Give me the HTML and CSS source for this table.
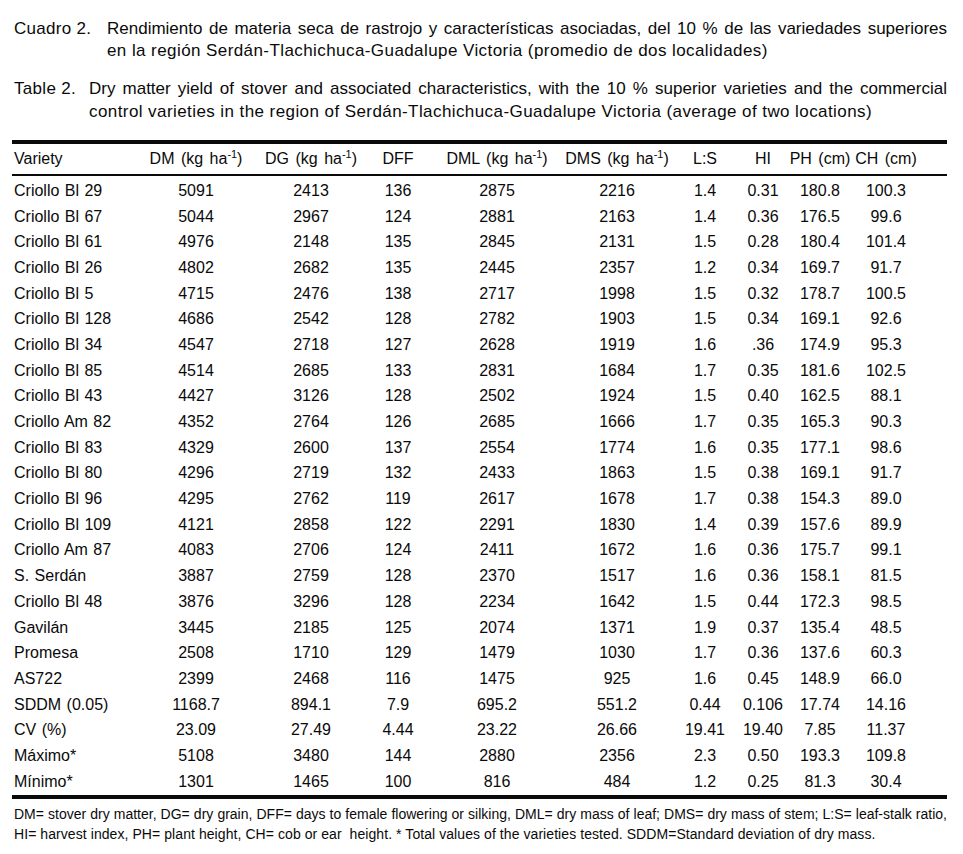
FILE: index.html
```
<!DOCTYPE html>
<html lang="es">
<head>
<meta charset="utf-8">
<title>Cuadro 2</title>
<link rel="stylesheet" href="styles.css">
</head>
<body>
<div class="page">
  <div class="cap cap-es">
    <div class="lbl">Cuadro 2.</div>
    <div class="txt">
      <div class="ln just">Rendimiento de materia seca de rastrojo y características asociadas, del 10 % de las variedades superiores</div>
      <div class="ln">en la región Serdán-Tlachichuca-Guadalupe Victoria (promedio de dos localidades)</div>
    </div>
  </div>
  <div class="cap cap-en">
    <div class="lbl">Table 2.</div>
    <div class="txt">
      <div class="ln just">Dry matter yield of stover and associated characteristics, with the 10 % superior varieties and the commercial</div>
      <div class="ln">control varieties in the region of Serdán-Tlachichuca-Guadalupe Victoria (average of two locations)</div>
    </div>
  </div>

  <div class="tbl">
    <div class="row head">
      <div class="v">Variety</div>
      <div class="c">DM (kg ha<sup>-1</sup>)</div>
      <div class="c">DG (kg ha<sup>-1</sup>)</div>
      <div class="c">DFF</div>
      <div class="c">DML (kg ha<sup>-1</sup>)</div>
      <div class="c">DMS (kg ha<sup>-1</sup>)</div>
      <div class="c">L:S</div>
      <div class="c">HI</div>
      <div class="c">PH (cm)</div>
      <div class="c">CH (cm)</div>
    </div>
    <div class="body">
      <div class="row"><div class="v">Criollo Bl 29</div><div class="c">5091</div><div class="c">2413</div><div class="c">136</div><div class="c">2875</div><div class="c">2216</div><div class="c">1.4</div><div class="c">0.31</div><div class="c">180.8</div><div class="c">100.3</div></div>
      <div class="row"><div class="v">Criollo Bl 67</div><div class="c">5044</div><div class="c">2967</div><div class="c">124</div><div class="c">2881</div><div class="c">2163</div><div class="c">1.4</div><div class="c">0.36</div><div class="c">176.5</div><div class="c">99.6</div></div>
      <div class="row"><div class="v">Criollo Bl 61</div><div class="c">4976</div><div class="c">2148</div><div class="c">135</div><div class="c">2845</div><div class="c">2131</div><div class="c">1.5</div><div class="c">0.28</div><div class="c">180.4</div><div class="c">101.4</div></div>
      <div class="row"><div class="v">Criollo Bl 26</div><div class="c">4802</div><div class="c">2682</div><div class="c">135</div><div class="c">2445</div><div class="c">2357</div><div class="c">1.2</div><div class="c">0.34</div><div class="c">169.7</div><div class="c">91.7</div></div>
      <div class="row"><div class="v">Criollo Bl 5</div><div class="c">4715</div><div class="c">2476</div><div class="c">138</div><div class="c">2717</div><div class="c">1998</div><div class="c">1.5</div><div class="c">0.32</div><div class="c">178.7</div><div class="c">100.5</div></div>
      <div class="row"><div class="v">Criollo Bl 128</div><div class="c">4686</div><div class="c">2542</div><div class="c">128</div><div class="c">2782</div><div class="c">1903</div><div class="c">1.5</div><div class="c">0.34</div><div class="c">169.1</div><div class="c">92.6</div></div>
      <div class="row"><div class="v">Criollo Bl 34</div><div class="c">4547</div><div class="c">2718</div><div class="c">127</div><div class="c">2628</div><div class="c">1919</div><div class="c">1.6</div><div class="c">.36</div><div class="c">174.9</div><div class="c">95.3</div></div>
      <div class="row"><div class="v">Criollo Bl 85</div><div class="c">4514</div><div class="c">2685</div><div class="c">133</div><div class="c">2831</div><div class="c">1684</div><div class="c">1.7</div><div class="c">0.35</div><div class="c">181.6</div><div class="c">102.5</div></div>
      <div class="row"><div class="v">Criollo Bl 43</div><div class="c">4427</div><div class="c">3126</div><div class="c">128</div><div class="c">2502</div><div class="c">1924</div><div class="c">1.5</div><div class="c">0.40</div><div class="c">162.5</div><div class="c">88.1</div></div>
      <div class="row"><div class="v">Criollo Am 82</div><div class="c">4352</div><div class="c">2764</div><div class="c">126</div><div class="c">2685</div><div class="c">1666</div><div class="c">1.7</div><div class="c">0.35</div><div class="c">165.3</div><div class="c">90.3</div></div>
      <div class="row"><div class="v">Criollo Bl 83</div><div class="c">4329</div><div class="c">2600</div><div class="c">137</div><div class="c">2554</div><div class="c">1774</div><div class="c">1.6</div><div class="c">0.35</div><div class="c">177.1</div><div class="c">98.6</div></div>
      <div class="row"><div class="v">Criollo Bl 80</div><div class="c">4296</div><div class="c">2719</div><div class="c">132</div><div class="c">2433</div><div class="c">1863</div><div class="c">1.5</div><div class="c">0.38</div><div class="c">169.1</div><div class="c">91.7</div></div>
      <div class="row"><div class="v">Criollo Bl 96</div><div class="c">4295</div><div class="c">2762</div><div class="c">119</div><div class="c">2617</div><div class="c">1678</div><div class="c">1.7</div><div class="c">0.38</div><div class="c">154.3</div><div class="c">89.0</div></div>
      <div class="row"><div class="v">Criollo Bl 109</div><div class="c">4121</div><div class="c">2858</div><div class="c">122</div><div class="c">2291</div><div class="c">1830</div><div class="c">1.4</div><div class="c">0.39</div><div class="c">157.6</div><div class="c">89.9</div></div>
      <div class="row"><div class="v">Criollo Am 87</div><div class="c">4083</div><div class="c">2706</div><div class="c">124</div><div class="c">2411</div><div class="c">1672</div><div class="c">1.6</div><div class="c">0.36</div><div class="c">175.7</div><div class="c">99.1</div></div>
      <div class="row"><div class="v">S. Serdán</div><div class="c">3887</div><div class="c">2759</div><div class="c">128</div><div class="c">2370</div><div class="c">1517</div><div class="c">1.6</div><div class="c">0.36</div><div class="c">158.1</div><div class="c">81.5</div></div>
      <div class="row"><div class="v">Criollo Bl 48</div><div class="c">3876</div><div class="c">3296</div><div class="c">128</div><div class="c">2234</div><div class="c">1642</div><div class="c">1.5</div><div class="c">0.44</div><div class="c">172.3</div><div class="c">98.5</div></div>
      <div class="row"><div class="v">Gavilán</div><div class="c">3445</div><div class="c">2185</div><div class="c">125</div><div class="c">2074</div><div class="c">1371</div><div class="c">1.9</div><div class="c">0.37</div><div class="c">135.4</div><div class="c">48.5</div></div>
      <div class="row"><div class="v">Promesa</div><div class="c">2508</div><div class="c">1710</div><div class="c">129</div><div class="c">1479</div><div class="c">1030</div><div class="c">1.7</div><div class="c">0.36</div><div class="c">137.6</div><div class="c">60.3</div></div>
      <div class="row"><div class="v">AS722</div><div class="c">2399</div><div class="c">2468</div><div class="c">116</div><div class="c">1475</div><div class="c">925</div><div class="c">1.6</div><div class="c">0.45</div><div class="c">148.9</div><div class="c">66.0</div></div>
      <div class="row"><div class="v">SDDM (0.05)</div><div class="c">1168.7</div><div class="c">894.1</div><div class="c">7.9</div><div class="c">695.2</div><div class="c">551.2</div><div class="c">0.44</div><div class="c">0.106</div><div class="c">17.74</div><div class="c">14.16</div></div>
      <div class="row"><div class="v">CV (%)</div><div class="c">23.09</div><div class="c">27.49</div><div class="c">4.44</div><div class="c">23.22</div><div class="c">26.66</div><div class="c">19.41</div><div class="c">19.40</div><div class="c">7.85</div><div class="c">11.37</div></div>
      <div class="row"><div class="v">Máximo*</div><div class="c">5108</div><div class="c">3480</div><div class="c">144</div><div class="c">2880</div><div class="c">2356</div><div class="c">2.3</div><div class="c">0.50</div><div class="c">193.3</div><div class="c">109.8</div></div>
      <div class="row"><div class="v">Mínimo*</div><div class="c">1301</div><div class="c">1465</div><div class="c">100</div><div class="c">816</div><div class="c">484</div><div class="c">1.2</div><div class="c">0.25</div><div class="c">81.3</div><div class="c">30.4</div></div>
    </div>
  </div>

  <div class="notes">
    <div class="ln just">DM= stover dry matter, DG= dry grain, DFF= days to female flowering or silking, DML= dry mass of leaf; DMS= dry mass of stem; L:S= leaf-stalk ratio,</div>
    <div class="ln">HI= harvest index, PH= plant height, CH= cob or ear&nbsp; height. * Total values of the varieties tested. SDDM=Standard deviation of dry mass.</div>
  </div>
</div>
</body>
</html>
```
FILE: styles.css
```
html, body {
  margin: 0;
  padding: 0;
  background: #fff;
}
body {
  font-family: "Liberation Sans", Arial, sans-serif;
  color: #0a0a0a;
}
.page {
  width: 933px;
  padding: 18px 16px 0 14px;
}
.cap {
  display: flex;
  font-size: 17px;
  line-height: 22px;
  letter-spacing: 0.42px;
}
.cap-es .lbl { width: 93px; flex: none; letter-spacing: 0.3px; }
.cap-en { margin-top: 15px; line-height: 23px; }
.cap-en .lbl { width: 75px; flex: none; letter-spacing: 0.3px; }
.txt { flex: 1; min-width: 0; }
.ln { white-space: nowrap; }
.ln.just {
  text-align: justify;
  text-align-last: justify;
}
.cap .ln.just { letter-spacing: 0; }

.tbl {
  margin: 17px 0 0 -2px;
  width: 935px;
  border-top: 4px solid #0a0a0a;
  font-size: 16px;
  word-spacing: 1px;
}
.row {
  display: grid;
  grid-template-columns: 128px 112px 118px 56px 142px 98px 78px 38px 76px 56px 33px;
  align-items: center;
  height: 25.7px;
}
.row.head {
  height: 30px;
  border-bottom: 2px solid #0a0a0a;
  word-spacing: 2px;
}
.body {
  padding-top: 2px;
  border-bottom: 4px solid #0a0a0a;
}
.v {
  padding-left: 2px;
  white-space: nowrap;
}
.c {
  margin: 0 -20px;
  text-align: center;
  white-space: nowrap;
}
sup {
  font-size: 0.68em;
  line-height: 0;
  vertical-align: 0.55em;
  word-spacing: 0;
}

.notes {
  margin-top: 5px;
  font-size: 14px;
  line-height: 20px;
  letter-spacing: 0.07px;
}
.notes .ln.just { letter-spacing: 0; }
```
